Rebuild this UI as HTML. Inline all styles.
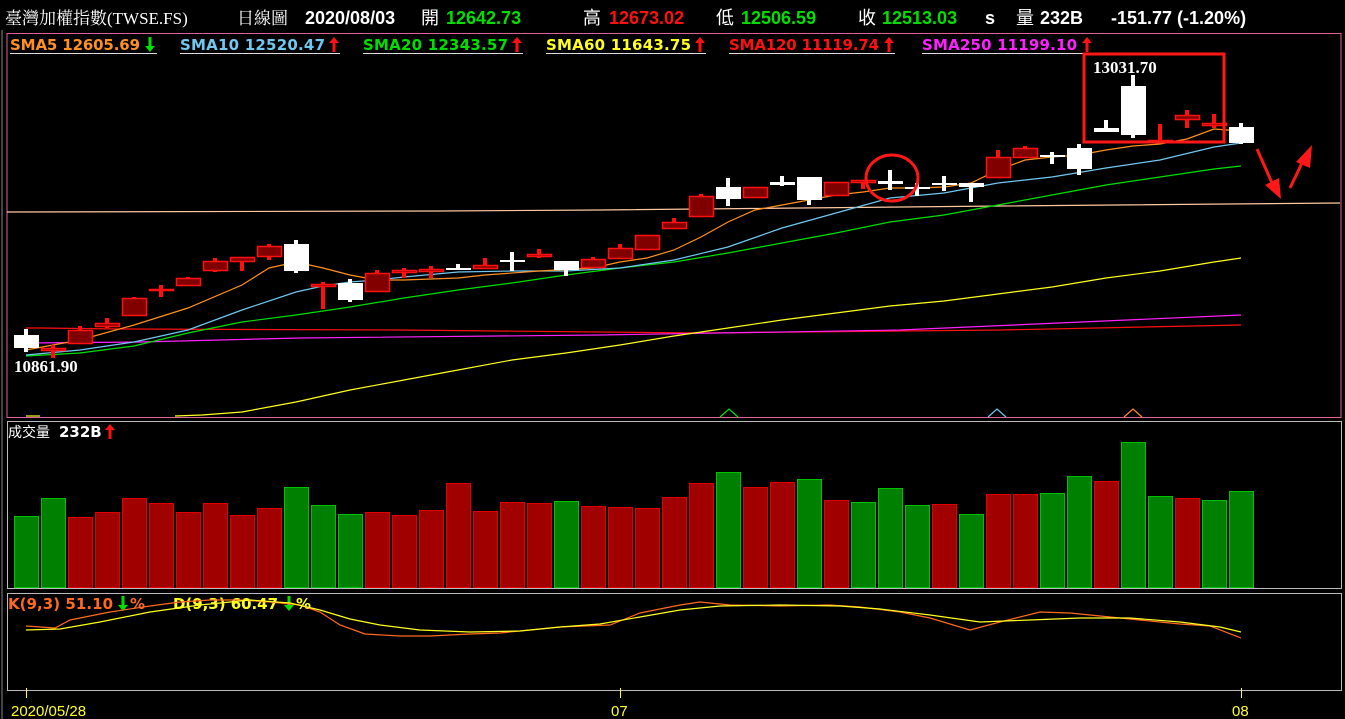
<!DOCTYPE html>
<html><head><meta charset="utf-8"><style>
html,body{margin:0;padding:0;background:#000;width:1345px;height:719px;overflow:hidden}
svg{display:block}
.h{font-family:"Liberation Sans","Noto Sans CJK TC",sans-serif;font-weight:bold;font-size:18px}
.s{font-family:"Liberation Serif","Noto Serif CJK SC",serif;font-size:17px}
.lg{font-family:"DejaVu Sans",sans-serif;font-weight:bold;font-size:15px}
</style></head><body>
<svg id="c" width="1345" height="719" xmlns="http://www.w3.org/2000/svg">
<defs>
<g id="up"><rect x="-1.5" y="-8" width="3" height="11" fill="#ff1010"/><polygon points="-5,-6 0,-12 5,-6" fill="#ff1010"/></g>
<g id="dn"><rect x="-1.5" y="-12" width="3" height="11" fill="#00e000"/><polygon points="-5,-3 0,3 5,-3" fill="#00e000"/></g>
</defs>
<rect width="1345" height="719" fill="#000"/>
<text x="5" y="24" class="s" fill="#fff">臺灣加權指數(TWSE.FS)</text>
<text x="237" y="24" class="s" fill="#fff">日線圖</text>
<text y="24" class="h"><tspan x="305" fill="#fff">2020/08/03</tspan><tspan x="421" fill="#fff" font-weight="normal">開</tspan><tspan x="446" fill="#00e000">12642.73</tspan><tspan x="583" fill="#fff" font-weight="normal">高</tspan><tspan x="609" fill="#ff1010">12673.02</tspan><tspan x="716" fill="#fff" font-weight="normal">低</tspan><tspan x="741" fill="#00e000">12506.59</tspan><tspan x="858" fill="#fff" font-weight="normal">收</tspan><tspan x="882" fill="#00e000">12513.03</tspan><tspan x="985" fill="#fff">s</tspan><tspan x="1016" fill="#fff" font-weight="normal">量</tspan><tspan x="1040" fill="#fff">232B</tspan><tspan x="1111" fill="#fff">-151.77 (-1.20%)</tspan></text>
<line x1="2" y1="30" x2="2" y2="719" stroke="#888"/>
<rect x="7" y="33.5" width="1334" height="384" fill="none" stroke="#e0609a"/>
<rect x="7.5" y="421.5" width="1334" height="167" fill="none" stroke="#bbb"/>
<rect x="7.5" y="593.5" width="1334" height="97" fill="none" stroke="#bbb"/>
<g class="lg">
<text x="10" y="50" fill="#ff9020" textLength="130">SMA5 12605.69</text><use href="#dn" x="150" y="49"/><line x1="10" y1="53.5" x2="157" y2="53.5" stroke="#ddd"/>
<text x="180" y="50" fill="#70c8f0" textLength="145">SMA10 12520.47</text><use href="#up" x="334" y="49"/><line x1="180" y1="53.5" x2="340" y2="53.5" stroke="#ddd"/>
<text x="363" y="50" fill="#00e000" textLength="145">SMA20 12343.57</text><use href="#up" x="517" y="49"/><line x1="363" y1="53.5" x2="523" y2="53.5" stroke="#ddd"/>
<text x="546" y="50" fill="#ffff20" textLength="145">SMA60 11643.75</text><use href="#up" x="700" y="49"/><line x1="546" y1="53.5" x2="706" y2="53.5" stroke="#ddd"/>
<text x="729" y="50" fill="#ff1010" textLength="150">SMA120 11119.74</text><use href="#up" x="889" y="49"/><line x1="729" y1="53.5" x2="895" y2="53.5" stroke="#ddd"/>
<text x="922" y="50" fill="#ff20ff" textLength="155">SMA250 11199.10</text><use href="#up" x="1087" y="49"/><line x1="922" y1="53.5" x2="1093" y2="53.5" stroke="#ddd"/>
<text x="8" y="437" fill="#fff" font-weight="normal" font-family="Noto Sans CJK TC,sans-serif" font-size="14">成交量</text><text x="59" y="437" fill="#fff">232B</text><use href="#up" x="110" y="436"/>
<text x="8" y="609" fill="#ff6a20" textLength="105">K(9,3) 51.10</text><use href="#dn" x="123" y="608"/><text x="130" y="609" fill="#ff6a20">%</text>
<text x="173" y="609" fill="#ffff20" textLength="105">D(9,3) 60.47</text><use href="#dn" x="289" y="608"/><text x="296" y="609" fill="#ffff20">%</text>
</g>
<polyline points="7,212 440,211 600,210 1000,206 1340,203" fill="none" stroke="#ffc8a0" stroke-width="1.2"/>
<g id="lines" fill="none" stroke-width="1.2">
<polyline stroke="#ff1010" points="26,328 40,328 120,329 400,330 700,333 1000,330 1241,325"/>
<polyline stroke="#ff20ff" points="26,343 140,342 300,338 600,335 900,330 1241,315"/>
<polyline stroke="#ffff20" points="26,416 40,416"/>
<polyline stroke="#ffff20" points="175,416 202,415 242,412 296,402 350,390 404,380 458,370 512,360 566,353 620,345 674,336 728,328 782,320 836,313 890,306 944,301 998,294 1052,287 1106,278 1160,271 1214,262 1241,258"/>
<polyline stroke="#00e000" points="26,356 80,353 134,346 188,333 242,322 296,315 350,307 404,298 458,290 512,283 566,275 620,268 674,262 728,253 782,243 836,233 890,222 944,215 998,205 1052,195 1106,185 1160,177 1214,169 1241,166"/>
<polyline stroke="#70c8f0" points="26,355 80,350 134,342 188,330 242,310 296,292 323,286 350,282 377,280 404,277 458,272 512,271 566,271 620,268 674,260 728,247 782,228 836,213 890,198 944,193 998,183 1052,177 1106,168 1160,160 1214,147 1241,143"/>
<polyline stroke="#ff9020" points="26,350 80,340 134,325 188,308 242,285 269,268 296,262 323,268 350,275 377,280 404,280 458,278 485,275 539,271 593,268 620,262 647,258 674,250 701,237 728,222 755,210 782,205 809,200 836,195 863,192 890,188 917,188 944,187 971,183 998,170 1025,160 1052,157 1079,155 1106,150 1133,146 1160,144 1187,139 1214,129 1241,131"/>
<polyline stroke="#00e000" points="720,417 729,409 738,417"/>
<polyline stroke="#70c8f0" points="988,417 997,409 1006,417"/>
<polyline stroke="#ff9020" points="1124,417 1133,409 1142,417"/>
<polyline stroke="#ff6a20" points="26,626 55,628 70,620 110,612 150,606 180,602 210,600 240,600 270,602 300,605 320,612 340,625 365,634 400,636 430,636 470,634 500,633 530,630 560,627 610,625 640,613 680,605 700,602 730,605 780,606 830,605 860,607 900,612 930,618 970,630 1000,622 1040,612 1070,613 1100,616 1140,620 1180,624 1210,626 1241,638"/>
<polyline stroke="#ffff20" points="26,630 60,629 100,622 150,612 200,605 250,600 290,603 320,610 350,619 380,625 420,630 470,632 520,631 560,627 600,624 640,617 680,610 720,606 780,605 840,606 880,609 930,615 980,622 1030,620 1080,618 1130,618 1180,622 1220,627 1241,632"/>
</g>
<g id="cd"></g>
<text x="14" y="372" class="s" font-weight="bold" fill="#fff" font-size="16">10861.90</text>
<text x="1093" y="73" class="s" font-weight="bold" fill="#fff" font-size="16">13031.70</text>
<ellipse cx="892" cy="178" rx="26" ry="23" fill="none" stroke="#ff1818" stroke-width="3"/>
<rect x="1084" y="54" width="140" height="88" fill="none" stroke="#ff1818" stroke-width="3"/>
<line x1="1257" y1="149" x2="1272" y2="183" stroke="#ff1818" stroke-width="3"/>
<polygon points="1281,199 1265,185 1279,178" fill="#ff1818"/>
<line x1="1290" y1="188" x2="1303" y2="161" stroke="#ff1818" stroke-width="3"/>
<polygon points="1312,145 1296,162 1310,168" fill="#ff1818"/>
<g stroke="#ffff20"><line x1="26.5" y1="688" x2="26.5" y2="698"/><line x1="620.5" y1="688" x2="620.5" y2="698"/><line x1="1241.5" y1="688" x2="1241.5" y2="698"/></g>
<g font-family="Liberation Sans,sans-serif" font-size="15" fill="#ffff20"><text x="11" y="716">2020/05/28</text><text x="611" y="716">07</text><text x="1232" y="716">08</text></g>
</svg>
<script>
var C=[
['W',335,348,329,352],['R',348,351,345,358],['R',330,344,326,344],['R',323,327,318,328],['R',298,316,297,316],['R',289,291,285,297],['R',278,286,277,286],['R',261,271,258,272],['R',257,262,257,271],['R',246,257,244,260],['W',244,271,240,273],['R',284,287,282,309],['W',283,300,279,302],['R',273,292,270,292],['R',270,273,268,278],['R',269,272,266,278],['W',268,270,264,270],['R',265,269,258,269],['W',260,261,252,271],['R',254,257,249,258],['W',261,270,261,276],['R',259,268,257,268],['R',248,259,244,259],['R',235,250,235,250],['R',222,229,218,229],['R',196,217,194,217],['W',187,199,178,206],['R',187,198,187,198],['W',182,185,176,186],['W',177,200,177,205],['R',182,196,182,196],['R',180,183,180,189],['W',181,184,170,190],['W',187,189,183,196],['W',183,185,176,191],['W',183,187,183,202],['R',157,178,150,178],['R',148,158,146,158],['W',155,157,152,164],['W',148,169,144,175],['W',128,132,120,132],['W',86,135,75,138],['R',140,143,124,143],['R',115,120,110,128],['R',123,126,114,128],['W',127,143,123,144]];
var V=[['G',516],['G',498],['R',517],['R',512],['R',498],['R',503],['R',512],['R',503],['R',515],['R',508],['G',487],['G',505],['G',514],['R',512],['R',515],['R',510],['R',483],['R',511],['R',502],['R',503],['G',501],['R',506],['R',507],['R',508],['R',497],['R',483],['G',472],['R',487],['R',482],['G',479],['R',500],['G',502],['G',488],['G',505],['R',504],['G',514],['R',494],['R',494],['G',493],['G',476],['R',481],['G',442],['G',496],['R',498],['G',500],['G',491]];
var s='';
for(var i=0;i<C.length;i++){var c=C[i],x=26+27*i,w=c[0]=='W'?'#fff':'#ff1010';
s+='<rect x="'+(x-2)+'" y="'+c[3]+'" width="4" height="'+Math.max(1,c[4]-c[3])+'" fill="'+w+'"/>';
var h=Math.max(2,c[2]-c[1]);
if(c[0]=='W')s+='<rect x="'+(x-12)+'" y="'+c[1]+'" width="25" height="'+h+'" fill="#fff"/>';
else s+='<rect x="'+(x-11.5)+'" y="'+(c[1]+.5)+'" width="24" height="'+(h-1)+'" fill="#800000" stroke="#ff1010" stroke-width="1.5"/>';}
for(var i=0;i<V.length;i++){var v=V[i],x=26+27*i;
s+='<rect x="'+(x-11.5)+'" y="'+(v[1]+.5)+'" width="24" height="'+(588-v[1]-1)+'" fill="'+(v[0]=='G'?'#008000':'#a00000')+'" stroke="'+(v[0]=='G'?'#00c000':'#e00000')+'"/>';}
document.getElementById('cd').innerHTML=s;
</script>
</body></html>
